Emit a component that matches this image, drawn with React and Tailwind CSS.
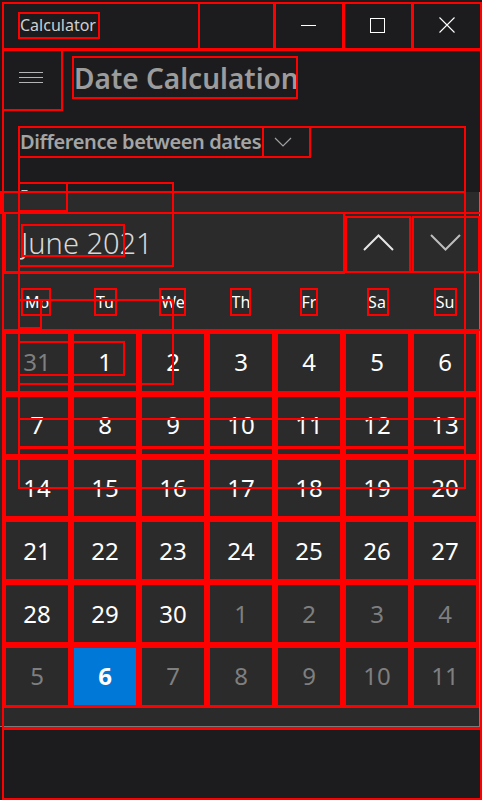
import React from "react";

const rows = [
  [[31, 1], [1], [2], [3], [4], [5], [6]],
  [[7], [8], [9], [10], [11], [12], [13]],
  [[14], [15], [16], [17], [18], [19], [20]],
  [[21], [22], [23], [24], [25], [26], [27]],
  [[28], [29], [30], [1, 1], [2, 1], [3, 1], [4, 1]],
  [[5, 1], [6, 2], [7, 1], [8, 1], [9, 1], [10, 1], [11, 1]],
];

const days = ["Mo", "Tu", "We", "Th", "Fr", "Sa", "Su"];

// annotation rectangles: [x1, y1, x2, y2]
const boxes = [
  [2, 2, 200, 50],
  [198, 2, 276, 50],
  [273, 2, 345, 50],
  [342, 2, 414, 50],
  [411, 2, 482, 50],
  [18, 12, 100, 39],
  [2, 49, 482, 800],
  [2, 49, 63, 111],
  [72, 56, 298, 99],
  [18, 126, 264, 158],
  [262, 126, 311, 158],
  [18, 126, 466, 489],
  [0, 191, 466, 214],
  [2, 212, 482, 729],
  [18, 182, 174, 267],
  [18, 182, 68, 212],
  [4, 212, 345, 274],
  [345, 216, 411, 273],
  [412, 216, 480, 273],
  [21, 224, 125, 257],
  [2, 271, 482, 331],
  [21, 288, 51, 316],
  [94, 288, 117, 316],
  [159, 288, 186, 316],
  [230, 288, 251, 316],
  [300, 288, 318, 316],
  [367, 288, 389, 316],
  [434, 288, 457, 316],
  [18, 299, 174, 385],
  [18, 299, 42, 329],
  [18, 341, 125, 376],
  [18, 418, 466, 449],
  [18, 446, 466, 489],
  [2, 728, 482, 800],
];

const cellBoxes = [];
for (let r = 0; r < 6; r++) {
  for (let c = 0; c < 7; c++) {
    cellBoxes.push([3 + c * 68, 331 + r * 62.8, 71 + c * 68, 331 + (r + 1) * 62.8]);
  }
}

export default function App() {
  return (
    <div className="relative w-[482px] h-[800px] overflow-hidden bg-[#1c1c1e] font-['Noto_Sans',sans-serif] text-white">
      {/* title bar */}
      <div className="flex h-[50px] items-center">
        <span className="ml-[20px] text-[16px] leading-none text-[#cfcfcf]">Calculator</span>
        <div className="ml-auto flex h-full">
          <div className="flex h-full w-[69px] items-center justify-center">
            <div className="h-px w-[15px] bg-white" />
          </div>
          <div className="flex h-full w-[69px] items-center justify-center">
            <div className="h-[15px] w-[15px] border border-white" />
          </div>
          <div className="flex h-full w-[70px] items-center justify-center">
            <svg width="16" height="16" viewBox="0 0 16 16">
              <path d="M0.5 0.5 L15.5 15.5 M15.5 0.5 L0.5 15.5" stroke="#ffffff" strokeWidth="1.1" fill="none" />
            </svg>
          </div>
        </div>
      </div>

      {/* header */}
      <div className="flex h-[56px] items-center">
        <div className="flex h-full w-[62px] items-center justify-center">
          <svg width="24" height="12" viewBox="0 0 24 12">
            <path d="M0 0.5 H24 M0 5.5 H24 M0 10.5 H24" stroke="#b4b4b4" strokeWidth="1" />
          </svg>
        </div>
        <span className="ml-[12px] text-[28px] font-semibold leading-none text-[#9c9c9c]">Date Calculation</span>
      </div>

      {/* mode selector */}
      <div className="mt-[21px] flex h-[30px] items-center pl-[20px]">
        <span className="text-[20px] font-semibold leading-[30px] tracking-[-0.4px] text-[#a4a4a4]">Difference between dates</span>
        <svg className="ml-[13px]" width="18" height="10" viewBox="0 0 18 10">
          <path d="M1 1 L9 9 L17 1" stroke="#a0a0a0" strokeWidth="1.2" fill="none" />
        </svg>
      </div>

      <div className="mt-[27px] pl-[20px] text-[15px] leading-[20px] text-[#cfcfcf]">From</div>

      {/* calendar flyout */}
      <div className="absolute left-0 top-[192px] h-[535px] w-[480px] border-b border-r border-[#7a7a7a] bg-[#2b2b2b] pt-[21px]">
        <div className="flex h-[59px]">
          <div className="flex w-[345px] items-center pl-[21px]">
            <span className="text-[29px] font-light leading-none text-[#d8d8d8]">June 2021</span>
          </div>
          <div className="flex w-[66px] items-center justify-center">
            <svg width="31" height="17" viewBox="0 0 31 17">
              <path d="M1 16 L15.5 1.5 L30 16" stroke="#e6e6e6" strokeWidth="2" fill="none" />
            </svg>
          </div>
          <div className="flex w-[68px] items-center justify-center">
            <svg width="31" height="17" viewBox="0 0 31 17">
              <path d="M1 1 L15.5 15.5 L30 1" stroke="#bdbdbd" strokeWidth="2" fill="none" />
            </svg>
          </div>
        </div>

        <div className="ml-[3px] grid h-[59px] grid-cols-[repeat(7,68px)] items-center">
          {days.map((d) => (
            <span key={d} className="text-center text-[16px] leading-none text-white">
              {d}
            </span>
          ))}
        </div>

        <div className="ml-[3px] grid grid-cols-[repeat(7,68px)] grid-rows-[repeat(6,62.8px)]">
          {rows.flat().map(([n, kind], i) => (
            <div
              key={i}
              className={
                kind === 2
                  ? "flex items-center justify-center bg-[#0078d7] text-[24px] font-bold text-white"
                  : kind === 1
                  ? "flex items-center justify-center text-[24px] text-[#7f7f7f]"
                  : "flex items-center justify-center text-[24px] text-white"
              }
            >
              {n}
            </div>
          ))}
        </div>
      </div>

      {/* annotation outlines */}
      <div className="pointer-events-none absolute inset-0">
        {boxes.map(([x1, y1, x2, y2], i) => (
          <div
            key={"b" + i}
            className="absolute border-2 border-[#ff0000]"
            style={{ left: x1, top: y1, width: x2 - x1, height: y2 - y1 }}
          />
        ))}
        {cellBoxes.map(([x1, y1, x2, y2], i) => (
          <div
            key={"c" + i}
            className="absolute border-[3px] border-[#ff0000]"
            style={{ left: x1, top: y1, width: x2 - x1, height: y2 - y1 }}
          />
        ))}
      </div>
    </div>
  );
}
